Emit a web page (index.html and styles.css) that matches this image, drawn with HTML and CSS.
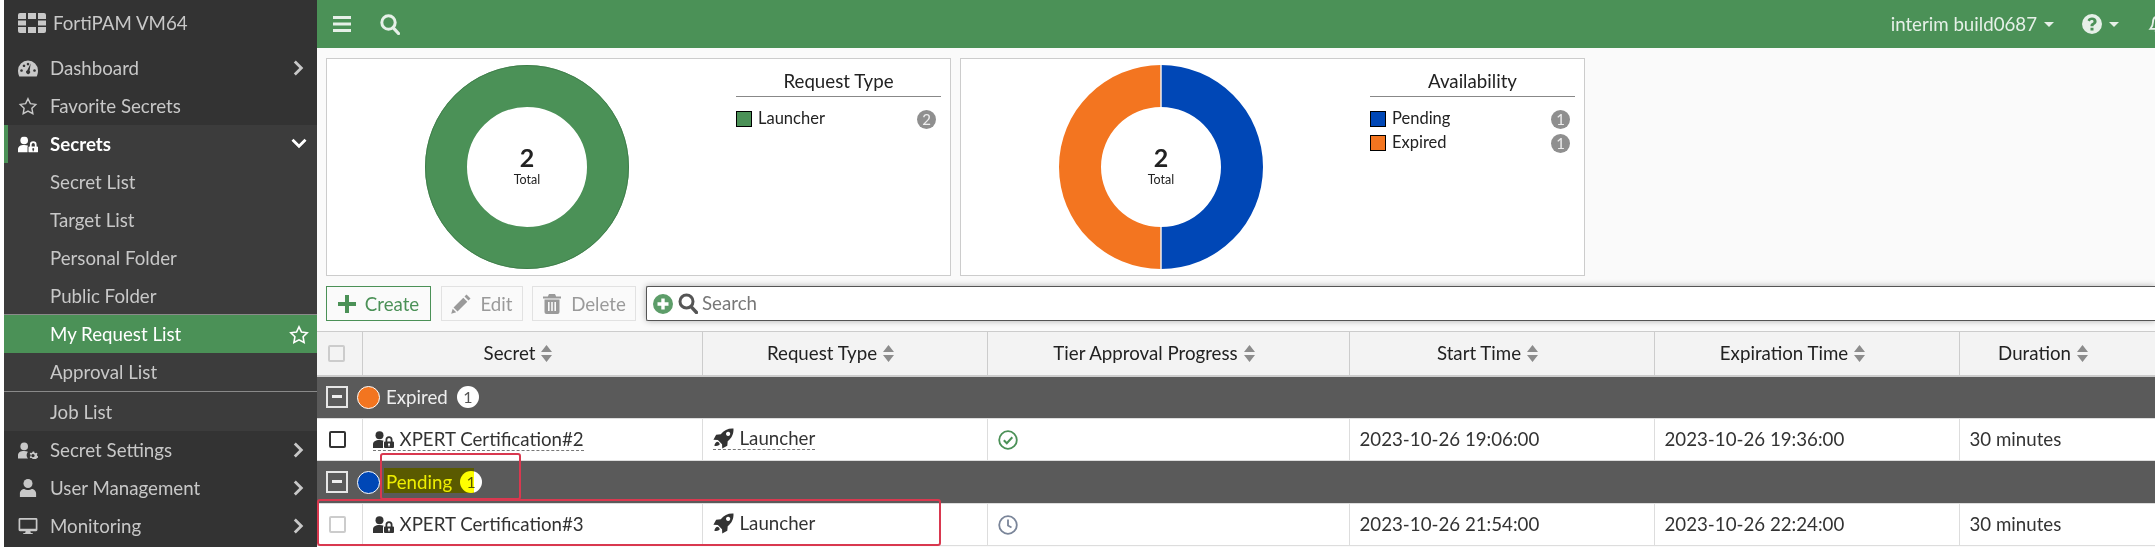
FILE: index.html
```html
<!DOCTYPE html>
<html lang="en">
<head>
<meta charset="utf-8">
<title>FortiPAM VM64</title>
<link rel="stylesheet" href="styles.css">
</head>
<body>
<svg class="defs" width="0" height="0" aria-hidden="true">
  <symbol id="i-userlock" viewBox="0 0 21 17">
    <circle cx="6.5" cy="4.2" r="4"/>
    <path d="M0 17v-3.5C0 10.5 2.500 9 6.500 9c1.600 0 3 .3 4.100.8-.4.500-.6 1.100-.6 1.700V17z"/>
    <path fill-rule="evenodd" d="M12 17a1 1 0 0 1-1-1v-4.500a1 1 0 0 1 1-1h.5V8.700a3.500 3.500 0 0 1 7 0v1.800h.5a1 1 0 0 1 1 1V16a1 1 0 0 1-1 1zM14.300 10.500h3.400V8.700a1.700 1.700 0 0 0-3.400 0zM16 12.200a1.100 1.100 0 0 0-.6 2V15.500h1.200v-1.300a1.100 1.100 0 0 0-.6-2z"/>
  </symbol>
  <symbol id="i-rocket" viewBox="0 0 20 20">
    <path fill-rule="evenodd" d="M19.500.5c.3 5-1.500 9-5.500 12.100l-.4 4.400L8.800 19.600l-.2-4.200-4-4-4.200-.2L3 6.400l4.400-.4C10.500 2 14.500.2 19.500.5zM14.400 3.600a2 2 0 1 0 .01 0z"/>
    <path d="M3.800 13.200c1.300-.2 2.500 1 2.600 2.400-1 1.300-3 1.600-5 1.600 0-1.900.9-3 2.400-4z"/>
  </symbol>
  <symbol id="i-sort" viewBox="0 0 11 17">
    <path d="M5.500 0 11 7H0zM0 10h11l-5.500 7z"/>
  </symbol>
  <symbol id="i-chev" viewBox="0 0 12 16">
    <path d="M2.800 .5 .8 2.500 6.300 8 .8 13.500l2 2L10.300 8z"/>
  </symbol>
</svg>

<div class="app">
  <nav class="sidebar">
    <div class="brand">
      <svg class="logo" viewBox="0 0 28 20"><path d="M2 0h6v6H0V2a2 2 0 0 1 2-2zM10 0h8v6h-8zM20 0h6a2 2 0 0 1 2 2v4h-8zM0 7.500h8v5H0zM20 7.500h8v5h-8zM0 14h8v6H2a2 2 0 0 1-2-2zM10 14h8v6h-8zM20 14h8v4a2 2 0 0 1-2 2h-6z"/></svg>
      <span>FortiPAM VM64</span>
    </div>
    <a class="item">
      <svg class="ico" viewBox="0 0 20 16"><path fill-rule="evenodd" d="M10 0a10 10 0 0 1 10 10c0 2.200-.5 4.300-1.300 6H1.300A13 13 0 0 1 0 10 10 10 0 0 1 10 0zM12.700 2.900 9.300 9.700a2 2 0 1 0 2.300.5zM3.500 8.700a1.300 1.300 0 1 0 .01 0zM6 4a1.300 1.300 0 1 0 .01 0zM10 2.300a1.300 1.300 0 1 0 .01 0zM16.500 8.700a1.300 1.300 0 1 0 .01 0z"/></svg>
      <span class="label">Dashboard</span>
      <svg class="chev" viewBox="0 0 12 16"><use href="#i-chev"/></svg>
    </a>
    <a class="item">
      <svg class="ico star" viewBox="0 0 20 19"><path d="M10 1.800 12.500 7l5.700.8-4.100 4 1 5.700-5.100-2.700-5.100 2.700 1-5.700-4.100-4 5.700-.8z"/></svg>
      <span class="label">Favorite Secrets</span>
    </a>
    <div class="group">
      <a class="item head">
        <svg class="ico lock" viewBox="0 0 21 17"><use href="#i-userlock"/></svg>
        <span class="label">Secrets</span>
        <svg class="chev down" viewBox="0 0 12 16"><use href="#i-chev"/></svg>
      </a>
      <a class="item sub">Secret List</a>
      <a class="item sub">Target List</a>
      <a class="item sub">Personal Folder</a>
      <a class="item sub rule-b">Public Folder</a>
      <a class="item sub active">My Request List
        <svg class="fav" viewBox="0 0 20 19"><path d="M10 1.800 12.500 7l5.700.8-4.100 4 1 5.700-5.100-2.700-5.100 2.700 1-5.700-4.100-4 5.700-.8z"/></svg>
      </a>
      <a class="item sub">Approval List</a>
      <a class="item sub job">Job List</a>
    </div>
    <a class="item">
      <svg class="ico" viewBox="0 0 21 17"><circle cx="6.500" cy="4.200" r="4"/><path d="M0 17v-3.500C0 10.500 2.500 9 6.500 9c1.500 0 2.800.2 3.900.7A6 6 0 0 0 10.500 17z"/><path fill-rule="evenodd" d="M15.500 9.500l1.500.1.300 1.300 1 .5 1.200-.6 1 1.100-.7 1.100.3 1 1.200.6-.2 1.500-1.300.2-.6 1-.2.7h-3.500l-.4-1-.9-.6-1.300.1-.6-1.300 1-.9V13l-1-.9.6-1.300 1.300.2.900-.6zM15.700 12.200a1.700 1.700 0 1 0 .01 0z"/></svg>
      <span class="label">Secret Settings</span>
      <svg class="chev" viewBox="0 0 12 16"><use href="#i-chev"/></svg>
    </a>
    <a class="item">
      <svg class="ico person" viewBox="0 0 18 20"><circle cx="9" cy="5" r="5"/><path d="M0 20v-4c0-3 2.500-5 5-5 1 .8 2.500 1.300 4 1.300s3-.5 4-1.300c2.500 0 5 2 5 5v4z"/></svg>
      <span class="label">User Management</span>
      <svg class="chev" viewBox="0 0 12 16"><use href="#i-chev"/></svg>
    </a>
    <a class="item">
      <svg class="ico" viewBox="0 0 20 18"><path fill-rule="evenodd" d="M1.500 0h17A1.500 1.500 0 0 1 20 1.500v11a1.500 1.500 0 0 1-1.500 1.500H12.500l.5 2h2v1H5v-1h2l.5-2h-6A1.500 1.500 0 0 1 0 12.500v-11A1.500 1.500 0 0 1 1.500 0zM1.800 1.800v9.700h16.400V1.800z"/></svg>
      <span class="label">Monitoring</span>
      <svg class="chev" viewBox="0 0 12 16"><use href="#i-chev"/></svg>
    </a>
  </nav>

  <main class="main">
    <header class="topbar">
      <svg class="burger" viewBox="0 0 18 16"><path d="M0 0h18v3H0zM0 6.500h18v3H0zM0 13h18v3H0z"/></svg>
      <svg class="tsearch" viewBox="0 0 20 21"><circle cx="8.500" cy="8.500" r="6.700" fill="none" stroke="currentColor" stroke-width="3"/><path d="m13.300 13.800 5.200 5.700" fill="none" stroke="currentColor" stroke-width="3.200" stroke-linecap="round"/></svg>
      <div class="spacer"></div>
      <span class="build">interim build0687</span><i class="caret"></i>
      <svg class="help" viewBox="0 0 20 20"><path fill-rule="evenodd" d="M10 0a10 10 0 1 1 0 20 10 10 0 0 1 0-20zM8.500 13.700v2.700h3v-2.700zM10 3.500c-2.200 0-3.800 1-4.500 2.800l2.100 1.300c.5-1 1.200-1.500 2.200-1.500 1 0 1.700.5 1.700 1.300 0 .7-.5 1.100-1.300 1.600-1 .6-1.700 1.300-1.700 2.600v.6h3v-.4c0-.6.400-.9 1.200-1.400 1.100-.7 1.900-1.500 1.900-3 0-2.300-2-3.900-4.600-3.900z"/></svg>
      <i class="caret"></i>
      <svg class="bell" viewBox="0 0 20 20"><path d="M10 2.500c-3.200 0-5 2.300-5 5.500 0 3.500-1 5-2.600 6.800h15.200C16 13 15 11.500 15 8c0-3.200-1.800-5.500-5-5.500zM7.500 16.500c.3 1.500 1.300 2.300 2.500 2.300s2.200-.8 2.500-2.300" fill="none" stroke="currentColor" stroke-width="1.800"/></svg>
    </header>

    <section class="charts">
      <div class="card">
        <div class="donut-wrap">
          <svg class="donut" viewBox="0 0 204 204">
            <circle cx="102" cy="102" r="81" fill="none" stroke="#4b9157" stroke-width="42"/>
            <circle cx="102" cy="102" r="101.500" fill="none" stroke="#3c7a47" stroke-width=".8"/>
            <text class="num" x="102" y="102">2</text>
            <text class="tot" x="102" y="119">Total</text>
          </svg>
        </div>
        <div class="legend">
          <h3 class="legend-title">Request Type</h3>
          <div class="legend-row"><i class="swatch green"></i><span class="legend-name">Launcher</span><b class="count">2</b></div>
        </div>
      </div>
      <div class="card">
        <div class="donut-wrap">
          <svg class="donut" viewBox="0 0 204 204">
            <path d="M102 0a102 102 0 0 1 0 204v-42a60 60 0 0 0 0-120z" fill="#0047b6"/>
            <path d="M102 0a102 102 0 0 0 0 204v-42a60 60 0 0 1 0-120z" fill="#f37520"/>
            <path d="M102 0v42M102 162v42" stroke="#eee" stroke-width="1.500"/>
            <text class="num" x="102" y="102">2</text>
            <text class="tot" x="102" y="119">Total</text>
          </svg>
        </div>
        <div class="legend">
          <h3 class="legend-title">Availability</h3>
          <div class="legend-row"><i class="swatch blue"></i><span class="legend-name">Pending</span><b class="count">1</b></div>
          <div class="legend-row"><i class="swatch orange"></i><span class="legend-name">Expired</span><b class="count">1</b></div>
        </div>
      </div>
    </section>

    <section class="toolbar">
      <button class="btn create"><svg class="b-ico" viewBox="0 0 18 18"><path d="M7 0h4v7h7v4h-7v7H7v-7H0V7h7z"/></svg>Create</button>
      <button class="btn off"><svg class="b-ico big" viewBox="0 0 20 20"><path d="M15.500 .5 19.500 4.500 17.500 6.500 13.500 2.500zM12.300 3.700l4 4L6.500 17.500l-4-4zM1.700 14.800l3.500 3.500L.2 19.800z"/></svg>Edit</button>
      <button class="btn off"><svg class="b-ico big" viewBox="0 0 18 20"><path fill-rule="evenodd" d="M6 0h6l1.200 2.500H18v2H0v-2h4.800zM1.500 5.500h15V18a2 2 0 0 1-2 2h-11a2 2 0 0 1-2-2zM5 8v9h1.600V8zM8.200 8v9h1.600V8zM11.400 8v9H13V8z"/></svg>Delete</button>
      <div class="search">
        <svg class="s-add" viewBox="0 0 20 20"><path fill-rule="evenodd" d="M10 0a10 10 0 1 1 0 20 10 10 0 0 1 0-20zM8.300 4.500v3.800H4.500v3.400h3.800v3.800h3.400v-3.800h3.800V8.300h-3.800V4.500z"/></svg>
        <svg class="s-mag" viewBox="0 0 20 21"><circle cx="8.500" cy="8.500" r="6.500" fill="none" stroke="currentColor" stroke-width="3"/><path d="m13.300 13.800 5.200 5.700" fill="none" stroke="currentColor" stroke-width="3.400" stroke-linecap="round"/></svg>
        <span class="s-text">Search</span>
      </div>
    </section>

    <table class="grid">
      <colgroup>
        <col class="c0"><col class="c1"><col class="c2"><col class="c3"><col class="c4"><col class="c5"><col class="c6">
      </colgroup>
      <thead>
        <tr>
          <th><i class="check faint head-check"></i></th>
          <th>Secret<svg class="sort"><use href="#i-sort"/></svg></th>
          <th>Request Type<svg class="sort"><use href="#i-sort"/></svg></th>
          <th>Tier Approval Progress<svg class="sort"><use href="#i-sort"/></svg></th>
          <th>Start Time<svg class="sort"><use href="#i-sort"/></svg></th>
          <th>Expiration Time<svg class="sort"><use href="#i-sort"/></svg></th>
          <th>Duration<svg class="sort"><use href="#i-sort"/></svg></th>
        </tr>
      </thead>
      <tbody>
        <tr class="grp">
          <td colspan="7"><div class="grp-in"><i class="minus"></i><i class="dot orange"></i><span class="grp-name">Expired</span><b class="pill">1</b></div></td>
        </tr>
        <tr class="row">
          <td><i class="check"></i></td>
          <td><span class="link dashed"><svg class="r-ico lockd"><use href="#i-userlock"/></svg>XPERT Certification#2</span></td>
          <td><span class="link dashed"><svg class="r-ico rocket"><use href="#i-rocket"/></svg>Launcher</span></td>
          <td><svg class="status ok" viewBox="0 0 20 20"><circle cx="10" cy="10" r="8.800" fill="none" stroke="currentColor" stroke-width="1.800"/><path d="m5.800 10.300 3 3 5.500-6" fill="none" stroke="currentColor" stroke-width="2"/></svg></td>
          <td>2023-10-26 19:06:00</td>
          <td>2023-10-26 19:36:00</td>
          <td>30 minutes</td>
        </tr>
        <tr class="grp">
          <td colspan="7"><div class="grp-in"><i class="minus"></i><i class="dot blue"></i><span class="grp-name">Pending</span><b class="pill p2">1</b></div></td>
        </tr>
        <tr class="row">
          <td><i class="check faint"></i></td>
          <td><span class="link"><svg class="r-ico lockd"><use href="#i-userlock"/></svg>XPERT Certification#3</span></td>
          <td><span class="link"><svg class="r-ico rocket"><use href="#i-rocket"/></svg>Launcher</span></td>
          <td><svg class="status wait" viewBox="0 0 20 20"><circle cx="10" cy="10" r="8.800" fill="none" stroke="currentColor" stroke-width="1.800"/><path d="M10 4.500V10.500l3.500 2" fill="none" stroke="currentColor" stroke-width="1.800"/></svg></td>
          <td>2023-10-26 21:54:00</td>
          <td>2023-10-26 22:24:00</td>
          <td>30 minutes</td>
        </tr>
      </tbody>
    </table>
  </main>

  <div class="mark"></div>
  <div class="callout c-group"></div>
  <div class="callout c-row"></div>
</div>
</body>
</html>
```

FILE: styles.css
```css
* { box-sizing: border-box; }
html, body { margin: 0; height: 547px; overflow: hidden; background: #fff; }
body { font: 18.700px/1.2 Lato, "Open Sans", sans-serif; color: #333; }
.defs { position: absolute; }
.app { position: relative; display: flex; width: 2155px; height: 547px; padding-left: 4px; overflow: hidden; }

.sidebar { flex: 0 0 313px; background: #333; color: #c8c8c8; }
.brand { display: flex; align-items: center; height: 49px; padding: 0 0 3px 14px; gap: 7px; }
.logo { width: 28px; height: 20px; fill: #c8c8c8; }
.item { position: relative; display: flex; align-items: center; height: 38px; padding-left: 14px; }
.ico { flex: 0 0 20px; width: 20px; height: 17px; fill: #c8c8c8; margin-right: 12px; }
.ico.star { fill: none; stroke: #c8c8c8; stroke-width: 1.500; height: 18px; }
.ico.lock { fill: #fff; }
.ico.person { height: 18px; }
.label { flex: 1; }
.chev { width: 12px; height: 16px; fill: #c8c8c8; margin-right: 12px; }
.chev.down { fill: #fff; transform: rotate(90deg); }
.group { background: #3c3c3c; }
.head { color: #fff; font-weight: 700; box-shadow: inset 4px 0 0 #4b9157; }
.sub { padding-left: 46px; }
.rule-b { box-shadow: inset 0 -1px 0 #8a8a8a; }
.job { height: 40px; padding-top: 1px; border-top: 1px solid #8a8a8a; }
.active { background: #4b9157; color: #fff; justify-content: space-between; padding-right: 8px; }
.fav { width: 20px; height: 19px; fill: none; stroke: #fff; stroke-width: 1.600; }

.main { flex: 1; min-width: 0; background: #fafafa; }
.topbar { display: flex; align-items: center; height: 48px; background: #4b9157; color: #e6f0e8; padding-left: 16px; }
.burger { width: 18px; height: 16px; fill: currentColor; }
.tsearch { width: 20px; height: 21px; margin-left: 29px; }
.spacer { flex: 1; }
.caret { width: 0; height: 0; margin-left: 7px; border: 5px solid transparent; border-top-color: currentColor; border-bottom: 0; }
.help { width: 20px; height: 20px; margin-left: 28px; fill: currentColor; }
.bell { flex: 0 0 20px; width: 20px; height: 20px; margin: 0 -13px 0 29px; }

.charts { display: flex; gap: 9px; padding: 10px 9px; }
.card { display: flex; width: 625px; height: 218px; background: #fff; border: 1px solid #ccc; }
.donut-wrap { flex: 0 0 400px; padding: 6px 0 0 97.500px; }
.donut { display: block; width: 204px; height: 204px; }
.num { font: 700 25px Lato, sans-serif; fill: #222; text-anchor: middle; }
.tot { font: 12.500px Lato, sans-serif; fill: #222; text-anchor: middle; }
.legend { width: 205px; margin-left: 9px; }
.legend-title { margin: 0; height: 38px; padding-top: 11px; font-size: 18.700px; font-weight: 400; text-align: center; color: #222; border-bottom: 1px solid #888; }
.legend-row { display: flex; align-items: center; height: 24px; }
.legend-title + .legend-row { margin-top: 10px; }
.swatch { flex: 0 0 16px; height: 16px; border: 1px solid #000; margin-right: 6px; }
.swatch.green { background: #4b9157; }
.swatch.blue, .dot.blue { background: #0047b6; }
.swatch.orange, .dot.orange { background: #f37520; }
.legend-name { flex: 1; font-size: 16.500px; color: #222; }
.count { width: 19px; height: 19px; margin-right: 5px; border-radius: 50%; background: #8f8f8f; color: #eee; font: 400 15px/19px Lato, sans-serif; text-align: center; }

.toolbar { display: flex; height: 35px; padding-left: 9px; margin-bottom: 10px; }
.btn { display: flex; align-items: center; justify-content: center; height: 35px; padding: 0; background: #fafafa; font: 18.700px Lato, sans-serif; border: 1px solid #e2e2e2; }
.b-ico { width: 18px; height: 18px; margin-right: 9px; fill: #9a9a9a; }
.b-ico.big { width: 20px; height: 20px; }
.btn.create { width: 105px; margin-right: 10px; color: #4b9157; border: 1px solid #4b9157; }
.btn.create .b-ico { fill: #4b9157; }
.btn.off { width: 82px; margin-right: 9px; color: #9a9a9a; }
.btn.off + .btn.off { width: 104px; }
.search { display: flex; flex: 1; align-items: center; margin-left: 1px; padding-left: 6px; background: #fff; border: 1px solid #555; border-right: 0; border-radius: 2px 0 0 2px; box-shadow: 0 0 6px rgba(0, 0, 0, .3); }
.s-add { width: 20px; height: 20px; fill: #5d9d69; }
.s-mag { width: 20px; height: 21px; margin-left: 5px; color: #555; }
.s-text { margin-left: 4px; color: #777; }

.grid { width: 1838px; table-layout: fixed; border-collapse: collapse; }
.c0 { width: 45px; } .c1 { width: 340px; } .c2 { width: 285px; } .c3 { width: 362px; }
.c4 { width: 305px; } .c5 { width: 305px; } .c6 { width: 196px; }
.grid th { height: 44px; padding: 0; background: #f3f3f3; border-top: 1px solid #ccc; border-bottom: 2px solid #ccc; border-right: 1px solid #ccc; font-weight: 400; color: #222; }
.grid th + th { padding-right: 28px; }
.sort { width: 11px; height: 17px; margin-left: 6px; fill: #8c8c8c; vertical-align: -2px; }
.grp td { height: 43px; padding: 0; background: #5a5a5a; border-bottom: 1px solid #ddd; }
.grp-in { display: flex; align-items: center; padding-left: 9px; color: #eee; }
.minus { position: relative; width: 22px; height: 22px; border: 2px solid #e6e6e6; }
.minus::after { content: ""; position: absolute; left: 4px; right: 4px; top: 7px; height: 3px; background: #eee; }
.dot { width: 23px; height: 23px; margin-left: 9px; border: 1.500px solid #fff; border-radius: 50%; }
.grp-name { margin-left: 6px; }
.pill { width: 22px; height: 22px; margin-left: 9px; border-radius: 50%; background: #fff; color: #555; font: 400 16px/22px Lato, sans-serif; text-align: center; }
.pill.p2 { margin-left: 8px; }
.row td { height: 42px; padding: 0 10px; background: #fff; border-right: 1px solid #ddd; border-bottom: 1px solid #ddd; white-space: nowrap; color: #333; }
.check { display: block; width: 17px; height: 17px; margin-left: 2px; border: 2px solid #333; border-radius: 2px; background: #fff; }
.check.faint { border-color: #ccc; }
.check.head-check { margin-left: 11px; background: #f3f3f3; }
.link { display: inline-flex; align-items: center; height: 23px; margin-top: 1px; border-bottom: 1px solid transparent; }
.dashed { border-bottom: 1px dashed #777; }
.r-ico { width: 21px; height: 17px; margin-right: 6px; fill: #333; }
.r-ico.rocket { width: 21px; height: 21px; }
.status { display: block; width: 20px; height: 20px; }
.ok { color: #4b9157; }
.wait { color: #7a8599; }

.mark { position: absolute; left: 384px; top: 468px; width: 90px; height: 25px; background: #ff0; mix-blend-mode: multiply; }
.callout { position: absolute; border: 2px solid #d9384f; border-radius: 3px; }
.c-group { left: 380px; top: 453px; width: 141px; height: 47px; }
.c-row { left: 317px; top: 499px; width: 624px; height: 47px; }
```
